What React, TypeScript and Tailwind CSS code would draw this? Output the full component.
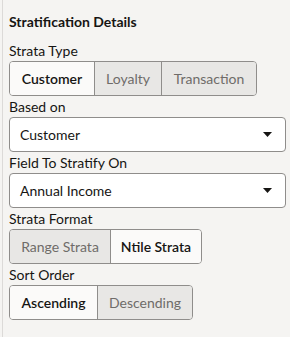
import React, { useState } from 'react';

type Option = { label: string; width: string };

const SegmentGroup = ({ options, value, onChange }: { options: Option[]; value: string; onChange: (v: string) => void }) => {
    return (
        <div className="flex h-[35px] w-fit rounded-[4px] border border-[#8f8d8b] overflow-hidden">
            {options.map((opt, i) => {
                const active = opt.label === value;
                return (
                    <button
                        key={opt.label}
                        onClick={() => onChange(opt.label)}
                        className={`${opt.width} h-full flex items-center justify-center text-[14px] ${i > 0 ? 'border-l border-[#8f8d8b]' : ''} ${active ? 'bg-[#fbfaf9] text-[#161513] font-semibold' : 'bg-[#e8e7e5] text-[#6f6c69]'}`}
                    >
                        {opt.label}
                    </button>
                );
            })}
        </div>
    );
};

const Select = ({ value }: { value: string }) => (
    <div className="flex h-[35px] w-full items-center justify-between rounded-[4px] border border-[#8f8d8b] bg-white pl-[10px] pr-[13px] text-[14px] text-[#161513]">
        <span>{value}</span>
        <svg width="9" height="5" viewBox="0 0 9 5">
            <path d="M0 0 L9 0 L4.5 5 Z" fill="#161513" />
        </svg>
    </div>
);

const Label = ({ children }: { children: React.ReactNode }) => (
    <div className="h-[21px] leading-[21px] text-[14px] text-[#161513]">{children}</div>
);

export default function App() {
    const [strataType, setStrataType] = useState('Customer');
    const [format, setFormat] = useState('Ntile Strata');
    const [sort, setSort] = useState('Ascending');

    return (
        <div className="w-[290px] h-[337px] bg-[#f5f4f2] pl-[2px]" style={{ fontFamily: 'Lato, "Liberation Sans", sans-serif' }}>
            <div className="h-full border-l border-[#dcdad8] pl-[6px] pr-[4px] pt-[12px]">
                <div className="h-[20px] leading-[20px] text-[14px] font-bold text-[#161513]">Stratification Details</div>
                <div className="mt-[8px]">
                    <Label>Strata Type</Label>
                    <SegmentGroup
                        options={[
                            { label: 'Customer', width: 'w-[84px]' },
                            { label: 'Loyalty', width: 'w-[67px]' },
                            { label: 'Transaction', width: 'w-[95px]' },
                        ]}
                        value={strataType}
                        onChange={setStrataType}
                    />
                    <Label>Based on</Label>
                    <Select value="Customer" />
                    <Label>Field To Stratify On</Label>
                    <Select value="Annual Income" />
                    <Label>Strata Format</Label>
                    <SegmentGroup
                        options={[
                            { label: 'Range Strata', width: 'w-[100px]' },
                            { label: 'Ntile Strata', width: 'w-[91px]' },
                        ]}
                        value={format}
                        onChange={setFormat}
                    />
                    <Label>Sort Order</Label>
                    <SegmentGroup
                        options={[
                            { label: 'Ascending', width: 'w-[87px]' },
                            { label: 'Descending', width: 'w-[95px]' },
                        ]}
                        value={sort}
                        onChange={setSort}
                    />
                </div>
            </div>
        </div>
    );
}
